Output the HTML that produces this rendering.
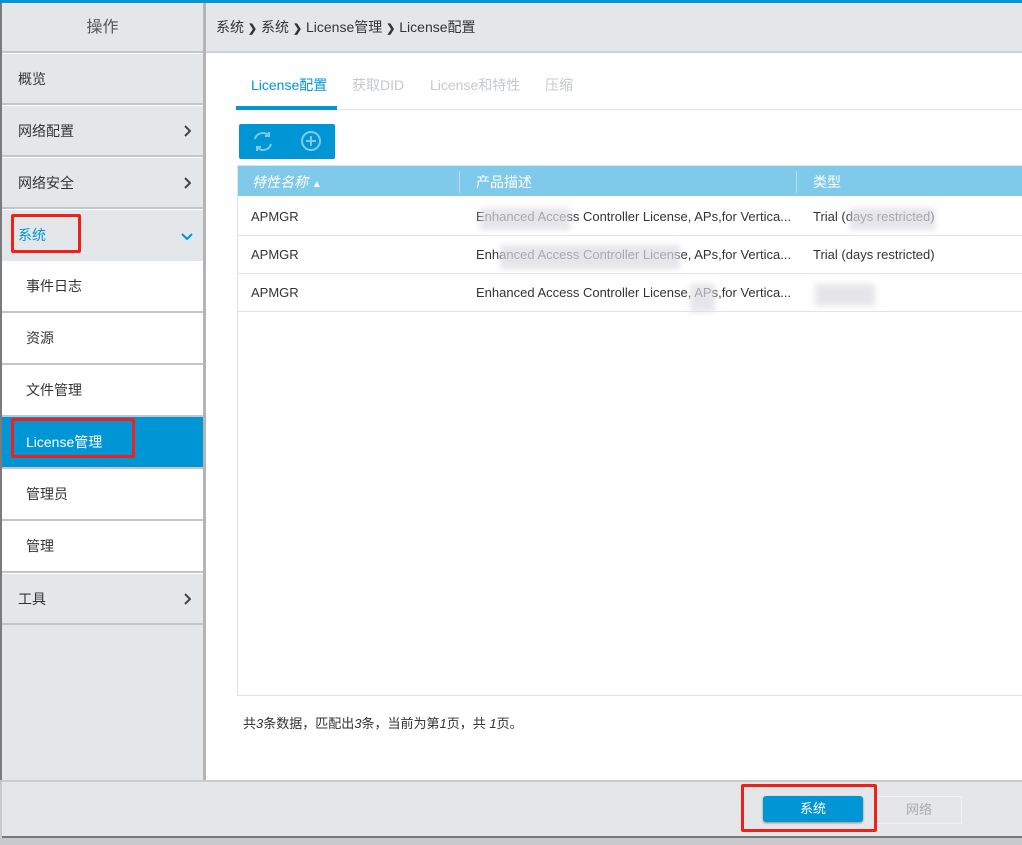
<!DOCTYPE html>
<html><head><meta charset="utf-8"><style>
*{margin:0;padding:0;box-sizing:border-box}
body{width:1022px;height:845px;overflow:hidden;background:#c8c9cb;font-family:"Liberation Sans","Noto Sans CJK SC",sans-serif;font-size:13px;color:#333;position:relative}
.abs{position:absolute}
#top{left:0;top:0;width:1022px;height:3px;background:#0096d6}
#side{left:0;top:3px;width:206px;height:777px;background:#e4e7e9;border-left:2px solid #7a7a7a;border-right:3px solid #b4b4b4}
.hd{height:50px;line-height:50px;text-align:center;font-size:16px;color:#555;border-bottom:2px solid #c3c5c7}
.it{height:52px;line-height:50px;padding-left:16px;font-size:14px;color:#333;border-bottom:2px solid #c3c5c7;position:relative;border-top:1px solid #fff}
.sub{background:#fff;padding-left:24px;border-top:none}
.act{background:#0096d6;color:#fff}
.chev{position:absolute;right:12px;top:19px}
#bc{left:206px;top:3px;width:816px;height:50px;background:#e4e7e9;border-bottom:2px solid #d0d2d4;line-height:48px;padding-left:10px;font-size:14px;color:#333}
#main{left:206px;top:53px;width:816px;height:727px;background:#fff}
.tab{top:75px;font-size:14px;color:#c5c8cc}
#tabline{left:236px;top:109px;width:786px;height:1px;background:#e2e4e6}
#tabact{left:236px;top:106px;width:101px;height:4px;background:#0096d6}
#tb{left:239px;top:124px;width:96px;height:35px;background:#0096d6;border-radius:2px}
#tbl{left:237px;top:165px;width:790px;height:531px;border:1px solid #e3e3e3}
#th{left:238px;top:166px;width:784px;height:30px;background:#7fc9ea;color:#fff;font-size:14px}
.row{left:238px;width:784px;height:38px;border-bottom:1px solid #e3e3e3;font-size:13px;line-height:38px;color:#333}
.blur{background:#dcdce2;opacity:.7;filter:blur(3px)}
#foot{left:243px;top:713px;font-size:13px;color:#333}
#bot{left:2px;top:780px;width:1020px;height:58px;background:#e5e6e8;border-top:2px solid #ccc;border-bottom:2px solid #777}
.red{border:3px solid #f0201a;border-radius:2px}
</style></head><body>
<div class="abs" id="top"></div>
<div class="abs" id="side">
<div class="hd">操作</div>
<div class="it">概览</div>
<div class="it">网络配置<svg class="chev" width="8" height="12" viewBox="0 0 8 12"><path d="M2 1l5 5-5 5" fill="none" stroke="#444" stroke-width="2"/></svg></div>
<div class="it">网络安全<svg class="chev" width="8" height="12" viewBox="0 0 8 12"><path d="M2 1l5 5-5 5" fill="none" stroke="#444" stroke-width="2"/></svg></div>
<div class="it" style="color:#0096d6;border-bottom:none">系统<svg class="chev" style="right:10px;top:22px" width="12" height="8" viewBox="0 0 12 8"><path d="M1 2l5 5 5-5" fill="none" stroke="#0096d6" stroke-width="2"/></svg></div>
<div class="it sub">事件日志</div>
<div class="it sub">资源</div>
<div class="it sub">文件管理</div>
<div class="it sub act">License管理</div>
<div class="it sub">管理员</div>
<div class="it sub">管理</div>
<div class="it">工具<svg class="chev" width="8" height="12" viewBox="0 0 8 12"><path d="M2 1l5 5-5 5" fill="none" stroke="#444" stroke-width="2"/></svg></div>
</div>
<div class="abs" id="bc">系统 <b style="font-size:11px">❯</b> 系统 <b style="font-size:11px">❯</b> License管理 <b style="font-size:11px">❯</b> License配置</div>
<div class="abs" id="main"></div>
<div class="abs tab" style="left:251px;color:#0096d6">License配置</div>
<div class="abs tab" style="left:352px">获取DID</div>
<div class="abs tab" style="left:430px">License和特性</div>
<div class="abs tab" style="left:545px">压缩</div>
<div class="abs" id="tabline"></div>
<div class="abs" id="tabact"></div>
<div class="abs" id="tb">
<svg width="96" height="35" viewBox="0 0 96 35"><g fill="none" stroke="#7fc9ea" stroke-width="2"><path d="M16 15a8 8 0 0 1 14-3M32 20a8 8 0 0 1-14 3"/><path d="M30 8v4h-4M18 27v-4h4"/><circle cx="72" cy="17" r="9"/><path d="M72 12v10M67 17h10"/></g></svg>
</div>
<div class="abs" id="tbl"></div>
<div class="abs" id="th">
<span class="abs" style="left:14px;top:6px;font-style:italic">特性名称 <span style="font-size:10px">▲</span></span>
<span class="abs" style="left:221px;top:5px;width:1px;height:22px;background:#b8dff2"></span>
<span class="abs" style="left:238px;top:6px">产品描述</span>
<span class="abs" style="left:558px;top:5px;width:1px;height:22px;background:#b8dff2"></span>
<span class="abs" style="left:575px;top:6px">类型</span>
</div>
<div class="abs row" style="top:198px"><span class="abs" style="left:13px">APMGR</span><span class="abs" style="left:238px">Enhanced Access Controller License, APs,for Vertica...</span><span class="abs" style="left:575px">Trial (days restricted)</span></div>
<div class="abs row" style="top:236px"><span class="abs" style="left:13px">APMGR</span><span class="abs" style="left:238px">Enhanced Access Controller License, APs,for Vertica...</span><span class="abs" style="left:575px">Trial (days restricted)</span></div>
<div class="abs row" style="top:274px"><span class="abs" style="left:13px">APMGR</span><span class="abs" style="left:238px">Enhanced Access Controller License, APs,for Vertica...</span></div>
<div class="abs blur" style="left:480px;top:208px;width:90px;height:22px"></div>
<div class="abs blur" style="left:500px;top:245px;width:180px;height:24px"></div>
<div class="abs blur" style="left:690px;top:284px;width:25px;height:28px"></div>
<div class="abs blur" style="left:850px;top:208px;width:85px;height:22px"></div>
<div class="abs blur" style="left:815px;top:284px;width:60px;height:22px"></div>
<div class="abs" id="foot">共<i>3</i>条数据，匹配出<i>3</i>条，当前为第<i>1</i>页，共 <i>1</i>页。</div>
<div class="abs" id="bot"></div>
<div class="abs" style="left:763px;top:796px;width:100px;height:26px;background:#0096d6;border-radius:3px;color:#fff;text-align:center;line-height:26px;font-size:13px;box-shadow:0 1px 2px #888">系统</div>
<div class="abs" style="left:876px;top:796px;width:86px;height:28px;border:1px solid #f2f2f2;color:#aaa;text-align:center;line-height:26px;font-size:13px">网络</div>
<div class="abs red" style="left:11px;top:214px;width:70px;height:39px"></div>
<div class="abs red" style="left:11px;top:418px;width:124px;height:40px"></div>
<div class="abs red" style="left:741px;top:784px;width:136px;height:48px"></div>
</body></html>
